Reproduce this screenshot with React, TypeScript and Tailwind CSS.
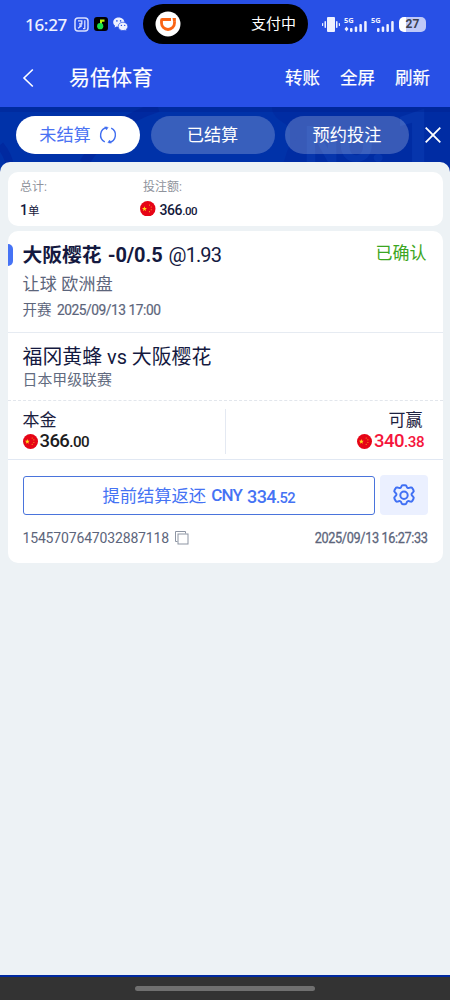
import type { ReactNode } from "react";

interface TabItem {
  label: string;
  active?: boolean;
}

const tabs: TabItem[] = [
  { label: "未结算", active: true },
  { label: "已结算" },
  { label: "预约投注" },
];

const navActions = ["转账", "全屏", "刷新"];

function FlagIcon({ className = "" }: { className?: string }) {
  return (
    <svg viewBox="0 0 16 16" className={`shrink-0 ${className}`}>
      <circle cx="8" cy="8" r="8" fill="#e60416" />
      <path d="M4.600 5.400l.7 1.800h1.900L5.700 8.400l.6 1.900-1.700-1.100L3 10.300l.6-1.900L2 7.200h1.900z" fill="#ffd91a" />
      <g fill="#f5a91c">
        <circle cx="9.800" cy="4.200" r=".6" />
        <circle cx="11.600" cy="6.200" r=".6" />
        <circle cx="11.600" cy="9" r=".6" />
        <circle cx="9.800" cy="11" r=".6" />
      </g>
    </svg>
  );
}

function RefreshIcon() {
  return (
    <svg viewBox="0 0 18 18" className="h-[18px] w-[18px]" fill="none" stroke="#3f6df0" strokeWidth="1.400">
      <path d="M5.800 15.800A7.600 7.600 0 0 1 8 1.500M12.200 2.200A7.600 7.600 0 0 1 10 16.500" />
      <path d="M5.800.8L9.200 1.400 7.400 4zM12.200 17.200l-3.400-.6L10.600 14z" fill="#3f6df0" strokeWidth=".4" />
    </svg>
  );
}

function GearIcon() {
  return (
    <svg viewBox="0 0 24 24" className="h-6 w-6" fill="none" stroke="#4070f4" strokeWidth="2" strokeLinejoin="round">
      <path d="M9.300 2.900Q9.600 1.500 10.800 1.500h2.400q1.200 0 1.500 1.400.4 2 2.500 1.300l1.400-.4q1.200-.3 1.800.8l1.100 1.900q.6 1.100-.3 1.900l-.9.900q-1.500 1.400 0 2.900l.9.900q.9.800.3 1.900l-1.100 2.100q-.6 1.100-1.800.8l-1.400-.4q-2-.6-2.500 1.400-.3 1.600-1.500 1.600h-2.400q-1.200 0-1.500-1.600-.5-2-2.500-1.400l-1.400.4q-1.200.3-1.800-.8l-1.100-2.100q-.6-1.100.3-1.900l.9-.9q1.500-1.500 0-2.900l-.9-.9q-.9-.8-.3-1.900l1.100-1.900q.6-1.100 1.800-.8l1.400.4q2.100.7 2.500-1.300z" transform="translate(0 .7)" />
      <circle cx="12" cy="12.300" r="3.700" />
    </svg>
  );
}

function CopyIcon() {
  return (
    <svg viewBox="0 0 14 14" className="h-[14px] w-[14px]" fill="none" stroke="#8d95a3" strokeWidth="1">
      <path d="M2.500 10.500H.5V.5h10v2" />
      <rect x="3" y="3" width="10" height="10" />
    </svg>
  );
}

function Signal({ dot = false }: { dot?: boolean }) {
  return (
    <div className="relative h-[17px] w-6">
      <span className="absolute -top-px left-0 font-['Noto_Sans',sans-serif] text-[7.500px] font-bold leading-[10px]">5G</span>
      <svg viewBox="0 0 24 17" className="h-[17px] w-6" fill="#eef1ff">
        {dot && <path d="M2.500 10.500L4.500 13l-2 2.500L.5 13z" />}
        <rect x="6" y="12" width="2.500" height="4" rx="1" />
        <rect x="10.700" y="10.500" width="2.500" height="5.500" rx="1" />
        <rect x="15.400" y="8" width="2.500" height="8" rx="1" />
        <rect x="20.200" y="5" width="2.500" height="11" rx="1" />
      </svg>
    </div>
  );
}

function StatusBar() {
  return (
    <div className="flex h-12 items-center pl-[25px] text-[#eef1ff]">
      <span className="w-[42px] whitespace-nowrap font-['Noto_Sans',sans-serif] text-[17px] font-medium leading-none tracking-[-0.3px]">
        16:27
      </span>
      <svg viewBox="0 0 15 15" className="ml-[7px] h-[15px] w-[15px]" fill="none" stroke="#d9e0ff">
        <rect x="1" y="1" width="13" height="13" rx="3" strokeWidth="1.500" />
        <path d="M4 3.800h3.800v3H5M7 6.800v2.400L4 11.200M5.200 9h2.600M10.800 3.300v8.400H9" strokeWidth="1.300" />
      </svg>
      <svg viewBox="0 0 14 14" className="ml-[5px] h-[14px] w-[14px]">
        <rect width="14" height="14" rx="3" fill="#000" />
        <path d="M6 2.500h4.500v2.200H8v3H6z" fill="#b8f20c" />
        <circle cx="6.200" cy="9.200" r="3.100" fill="#16e04c" />
      </svg>
      <svg viewBox="0 0 15 15" className="ml-[5px] h-[15px] w-[15px]">
        <path d="M5.800.5C2.700.5.200 2.600.200 5.200c0 1.400.7 2.700 1.900 3.500l-.5 1.700 2-.9c.7.2 1.400.3 2.200.3 3.100 0 5.600-2.100 5.600-4.600S8.900.5 5.800.5z" fill="#eef1ff" />
        <path d="M10 5.200c-2.700 0-4.800 1.800-4.800 4.200s2.100 4.200 4.800 4.200c.6 0 1.200-.1 1.700-.3l1.800.8-.4-1.500c1-.7 1.700-1.900 1.700-3.200 0-2.400-2.100-4.200-4.800-4.200z" fill="#eef1ff" stroke="#2850e6" strokeWidth=".7" />
        <g fill="#2850e6">
          <circle cx="3.900" cy="3.900" r=".8" />
          <circle cx="7.600" cy="3.900" r=".8" />
          <circle cx="8.400" cy="8.400" r=".7" />
          <circle cx="11.700" cy="8.400" r=".7" />
        </g>
      </svg>

      <div className="ml-[15px] flex h-10 w-[165px] items-center justify-between rounded-full bg-black pl-3 pr-3">
        <svg viewBox="0 0 26 26" className="h-[26px] w-[26px]">
          <circle cx="13" cy="13" r="12.500" fill="#fff" />
          <path d="M16 8.500H7.200q-.7 0-.7.700V12a6.500 6.500 0 0 0 13 0v-1.500" fill="none" stroke="#fa6414" strokeWidth="2.800" />
          <path d="M17.500 7.100h3.400v3.600h-2.800z" fill="#fa6414" />
        </svg>
        <span className="pt-px text-[15px] leading-none text-white">支付中</span>
      </div>

      <svg viewBox="0 0 18 17" className="ml-[14px] h-[17px] w-[18px]" fill="#eef1ff">
        <rect x="5" y="1" width="8" height="15" rx="1" />
        <rect x="2.500" y="5" width="1.500" height="7" rx=".7" />
        <rect x="0" y="7" width="1.200" height="3" rx=".6" />
        <rect x="14" y="5" width="1.500" height="7" rx=".7" />
        <rect x="16.800" y="7" width="1.200" height="3" rx=".6" />
      </svg>
      <div className="ml-1 flex gap-[3px]">
        <Signal dot />
        <Signal />
      </div>
      <div className="ml-[4px] flex h-[15px] w-[27px] items-center justify-center rounded-[5px] bg-linear-to-r from-white from-26% to-[#bfc9f8] to-26% text-[12px] font-bold leading-none text-[#3d4250]">
        27
      </div>
    </div>
  );
}

function NavBar() {
  return (
    <div className="flex h-[59px] items-center pl-[22px] pr-[20px] text-white">
      <svg viewBox="0 0 12 20" className="h-5 w-3" fill="none" stroke="#fff" strokeWidth="1.600">
        <path d="M10.800 1.500L2 10l8.800 8.500" />
      </svg>
      <h1 className="ml-[35px] pt-[2px] text-[21px] leading-none [-webkit-text-stroke:0.2px]">易倍体育</h1>
      <div className="ml-auto flex gap-5 pt-[2px]">
        {navActions.map((action) => (
          <button key={action} className="text-[17.5px] leading-none [-webkit-text-stroke:0.2px]">
            {action}
          </button>
        ))}
      </div>
    </div>
  );
}

function TabStrip() {
  return (
    <div className="relative h-[68px] overflow-hidden bg-[#002ca3]">
      {/* watermark behind the tabs */}
      <svg viewBox="0 0 450 68" className="absolute inset-0 h-full w-full">
        <rect width="290" height="68" fill="#0032a9" />
        <path d="M272 0c0 15 20 15 25 32-12 8-10 18-14 24h20V0z" fill="#002ca3" />
        <path d="M84 56C100 30 126 10 158 0" fill="none" stroke="#0029a0" strokeWidth="10" />
        <path d="M0 38c5 6 9 13 10 22" fill="none" stroke="#0029a0" strokeWidth="8" />
        <text x="304" y="55" fontSize="50" fontWeight="900" fill="#0635ac" className="font-[Roboto,sans-serif]">
          NO.
        </text>
        <text x="394" y="55" fontSize="74" fontWeight="900" fill="#0635ac" className="font-[Roboto,sans-serif]">
          1
        </text>
        <path d="M0 0h450v5H0z" fill="#001f8c" opacity=".35" />
      </svg>
      <div className="relative flex gap-[10.500px] pl-4 pt-[9px]">
        {tabs.map((tab) => (
          <button
            key={tab.label}
            className={`flex h-[38px] w-[124px] items-center justify-center gap-2 rounded-full text-[17.2px] leading-none ${
              tab.active ? "bg-white text-[#4a72f3]" : "bg-white/22 text-white"
            }`}
          >
            <span className="pt-[2px]">{tab.label}</span>
            {tab.active && <RefreshIcon />}
          </button>
        ))}
        <svg viewBox="0 0 16 16" className="ml-[5px] mt-[11px] h-4 w-4" stroke="#fff" strokeWidth="1.800">
          <path d="M.7.7l14.600 14.600M15.300.7L.7 15.300" />
        </svg>
      </div>
    </div>
  );
}

function Amount({ whole, cents, className = "" }: { whole: string; cents: string; className?: string }) {
  return (
    <span className={`inline-block font-medium whitespace-nowrap ${className}`}>
      {whole}
      <span className="text-[0.82em]">.{cents}</span>
    </span>
  );
}

function SummaryCard() {
  return (
    <div className="flex h-[54px] rounded-[10px] bg-white pl-[12.500px] pt-[7px]">
      <div className="w-[123px]">
        <div className="text-[12px] leading-[16px] text-[#8f939c]">总计:</div>
        <div className="mt-[7px] text-[14px] font-medium leading-[16px] text-[#14193c]">
          1<span className="text-[11.5px] font-normal">单</span>
        </div>
      </div>
      <div>
        <div className="text-[12px] leading-[16px] text-[#8f939c]">投注额:</div>
        <div className="mt-[6px] -ml-[3px] flex items-center gap-[4px] text-[#14193c]">
          <FlagIcon className="-mt-[4px] h-[15.500px] w-[15.500px]" />
          <Amount whole="366" cents="00" className="pt-px text-[14px] leading-[17px] tracking-[-0.4px]" />
        </div>
      </div>
    </div>
  );
}

function Stake({ label, right = false, children }: { label: string; right?: boolean; children: ReactNode }) {
  return (
    <div className={`flex flex-1 flex-col ${right ? "items-end" : ""}`}>
      <div className={`pt-px text-[17px] leading-[20px] text-[#1b2140] ${right ? "pr-[5px]" : ""}`}>{label}</div>
      <div className="-mt-px flex items-center gap-[2px]">
        <FlagIcon className="h-[15px] w-[15px]" />
        {children}
      </div>
    </div>
  );
}

function BetCard() {
  return (
    <div className="mt-[5px] h-[332px] rounded-[10px] bg-white">
      <div className="flex h-[101px] items-start pt-[12px]">
        <div className="mt-[1px] h-[22px] w-[5px] rounded-r-[5px] bg-[#4673f5]" />
        <div className="ml-[10px]">
          <div className="flex h-[24px] items-center gap-[6px] whitespace-nowrap text-[#14193f]">
            <span className="pt-px text-[19.800px] font-bold">大阪樱花</span>
            <span className="text-[20px] font-bold tracking-[-0.1px]">-0/0.5</span>
            <span className="inline-block origin-left scale-y-105 text-[20px] tracking-[-0.900px]">@1.93</span>
          </div>
          <div className="mt-[6px] text-[17px] leading-[22px] tracking-[0.2px] text-[#5c657b]">让球 欧洲盘</div>
          <div className="mt-[6px] flex gap-[5px] text-[14.500px] leading-[20px] text-[#5c657b]">
            <span>开赛</span>
            <span className="inline-block origin-left scale-x-95 tracking-[-0.5px] [-webkit-text-stroke:0.2px]">2025/09/13 17:00</span>
          </div>
        </div>
        <div className="ml-auto mr-4 -mt-px text-[17px] leading-[22px] text-[#3ca622]">已确认</div>
      </div>

      <div className="h-[68px] border-t border-[#e6ebf2] pl-[15px] pt-[13px]">
        <div className="text-[19.900px] leading-[24px] text-[#14193f]">福冈黄蜂 vs 大阪樱花</div>
        <div className="text-[14.900px] leading-[20px] text-[#626b80]">日本甲级联赛</div>
      </div>

      <div className="flex h-[59px] border-t border-dashed border-[#e2e6ec] px-[15px] pt-2">
        <Stake label="本金">
          <Amount whole="366" cents="00" className="text-[18.500px] leading-[24px] tracking-[-0.6px] text-[#1c1c20]" />
        </Stake>
        <div className="h-[45px] w-px bg-[#e4e9f2]" />
        <Stake label="可赢" right>
          <Amount whole="340" cents="38" className="mr-[3.500px] text-[18.500px] leading-[24px] tracking-[-0.5px] text-[#f5163c]" />
        </Stake>
      </div>

      <div className="border-t border-[#e1e8f3] px-[15px] pt-[15px]">
        <div className="flex gap-[5px]">
          <button className="mt-px flex h-[39px] w-[352.500px] items-center justify-center gap-[5px] rounded-[3px] border border-[#4a74dc] text-[#4573f4]">
            <span className="pt-[2px] text-[17.300px]">提前结算返还</span>
            <span className="pt-px text-[17px] font-medium tracking-[-0.8px]">CNY</span>
            <Amount whole="334" cents="52" className="pt-px text-[18px] tracking-[-0.6px]" />
          </button>
          <button className="flex h-10 w-[47.500px] items-center justify-center rounded-[4px] bg-[#ebf0ff]">
            <GearIcon />
          </button>
        </div>
        <div className="mt-[13px] flex h-5 items-center text-[#5c657b]">
          <span className="text-[14px] tracking-[-0.16px]">1545707647032887118</span>
          <span className="ml-[6px]">
            <CopyIcon />
          </span>
          <span className="ml-auto inline-block origin-right scale-x-[0.92] text-[13.800px] tracking-[-0.4px] [-webkit-text-stroke:0.3px]">
            2025/09/13 16:27:33
          </span>
        </div>
      </div>
    </div>
  );
}

export default function App() {
  return (
    <div className="flex h-[1000px] w-[450px] flex-col overflow-hidden bg-[#0029a0] font-[Roboto,'Noto_Sans_CJK_SC',sans-serif]">
      <header className="bg-[#2850e6]">
        <StatusBar />
        <NavBar />
      </header>
      <TabStrip />
      <main className="relative -mt-[13px] h-[813px] rounded-t-[10px] bg-[#edf2f5] px-[7.500px] pt-[10px]">
        <SummaryCard />
        <BetCard />
      </main>
      <footer className="mt-[2px] flex h-[23px] justify-center bg-[#333333] pt-[9px]">
        <div className="h-[5px] w-[180px] rounded-full bg-[#707070]" />
      </footer>
    </div>
  );
}
